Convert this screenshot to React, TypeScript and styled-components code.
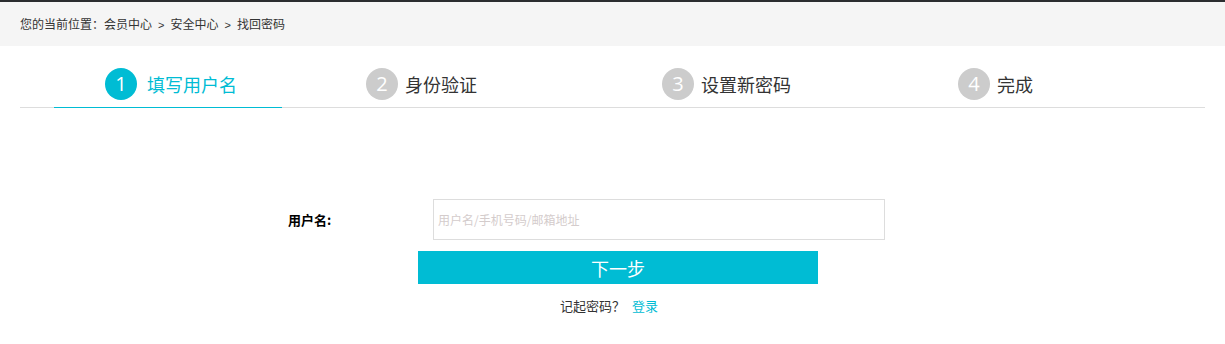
import React from "react";
import styled, { createGlobalStyle } from "styled-components";

const steps = ["填写用户名", "身份验证", "设置新密码", "完成"];

const App: React.FC = () => {
  return (
    <>
      <GlobalStyle />
      <TopBar />
      <Crumbs>
        您的当前位置：会员中心<Sep>&gt;</Sep>安全中心<Sep>&gt;</Sep>找回密码
      </Crumbs>
      <Steps>
        {steps.map((s, i) => (
          <StepItem key={s}>
            <StepInner $active={i === 0}>
              <Num $active={i === 0}>{i + 1}</Num>
              <StepText $active={i === 0}>{s}</StepText>
            </StepInner>
          </StepItem>
        ))}
      </Steps>
      <Form>
        <Row>
          <Label>用户名:</Label>
          <Input placeholder="用户名/手机号码/邮箱地址" />
        </Row>
        <Submit>下一步</Submit>
        <Links>
          记起密码？ <a>登录</a>
        </Links>
      </Form>
    </>
  );
};

export default App;

const GlobalStyle = createGlobalStyle`
  body {
    margin: 0;
    background: #fff;
    font-family: "Noto Sans CJK SC", "Noto Sans", sans-serif;
    color: #333;
  }
`;

const TopBar = styled.div`
  height: 2px;
  background-color: #2b2d30;
`;

const Crumbs = styled.div`
  height: 44px;
  background-color: #f5f5f5;
  padding-left: 20px;
  font-size: 12px;
  line-height: 44px;
  color: #333;
`;

const Sep = styled.span`
  margin: 0 6px;
  font-family: "Liberation Sans", sans-serif;
  font-size: 11px;
`;

const Steps = styled.div`
  margin: 0 20px;
  display: flex;
  border-bottom: 1px solid #ddd;
  height: 61px;
`;

const StepItem = styled.div`
  width: 296px;
  height: 100%;
`;

const StepInner = styled.div<{ $active?: boolean }>`
  height: 100%;
  box-sizing: border-box;
  display: flex;
  align-items: flex-start;
  padding-top: 22px;
  ${(p) =>
    p.$active
      ? `
    height: calc(100% + 1px);
    margin: 0 34px;
    justify-content: center;
    border-bottom: 1px solid #00bcd4;
    padding-left: 6px;
  `
      : `
    padding-left: 50px;
  `}
`;

const Num = styled.span<{ $active?: boolean }>`
  width: 32px;
  height: 32px;
  border-radius: 50%;
  background-color: ${(p) => (p.$active ? "#00bcd4" : "#ccc")};
  color: #fff;
  font-family: "Open Sans", sans-serif;
  font-size: 20px;
  line-height: 32px;
  text-align: center;
  flex-shrink: 0;
`;

const StepText = styled.span<{ $active?: boolean }>`
  margin-left: ${(p) => (p.$active ? "10px" : "7px")};
  font-size: 18px;
  line-height: 32px;
  color: ${(p) => (p.$active ? "#00bcd4" : "#333")};
`;

const Form = styled.div`
  padding: 91px 0 0 288px;
`;

const Row = styled.div`
  display: flex;
  align-items: center;
`;

const Label = styled.div`
  width: 145px;
  font-size: 13px;
  font-weight: bold;
  color: #000;
`;

const Input = styled.input`
  width: 452px;
  height: 41px;
  box-sizing: border-box;
  border: 1px solid #ddd;
  padding: 0 4px;
  font-size: 12px;
  font-family: "Noto Sans CJK SC", sans-serif;
  outline: none;

  &::placeholder {
    color: #d4cccc;
  }
`;

const Submit = styled.button`
  display: block;
  margin: 11px 0 0 130px;
  width: 400px;
  height: 33px;
  border: none;
  background-color: #00bcd4;
  color: #fff;
  font-size: 18px;
  font-family: "Noto Sans CJK SC", sans-serif;
  cursor: pointer;
`;

const Links = styled.div`
  margin: 12px 0 0 130px;
  width: 382px;
  text-align: center;
  font-size: 13px;
  color: #333;

  a {
    margin-left: 4px;
    color: #00bcd4;
    cursor: pointer;
  }
`;
